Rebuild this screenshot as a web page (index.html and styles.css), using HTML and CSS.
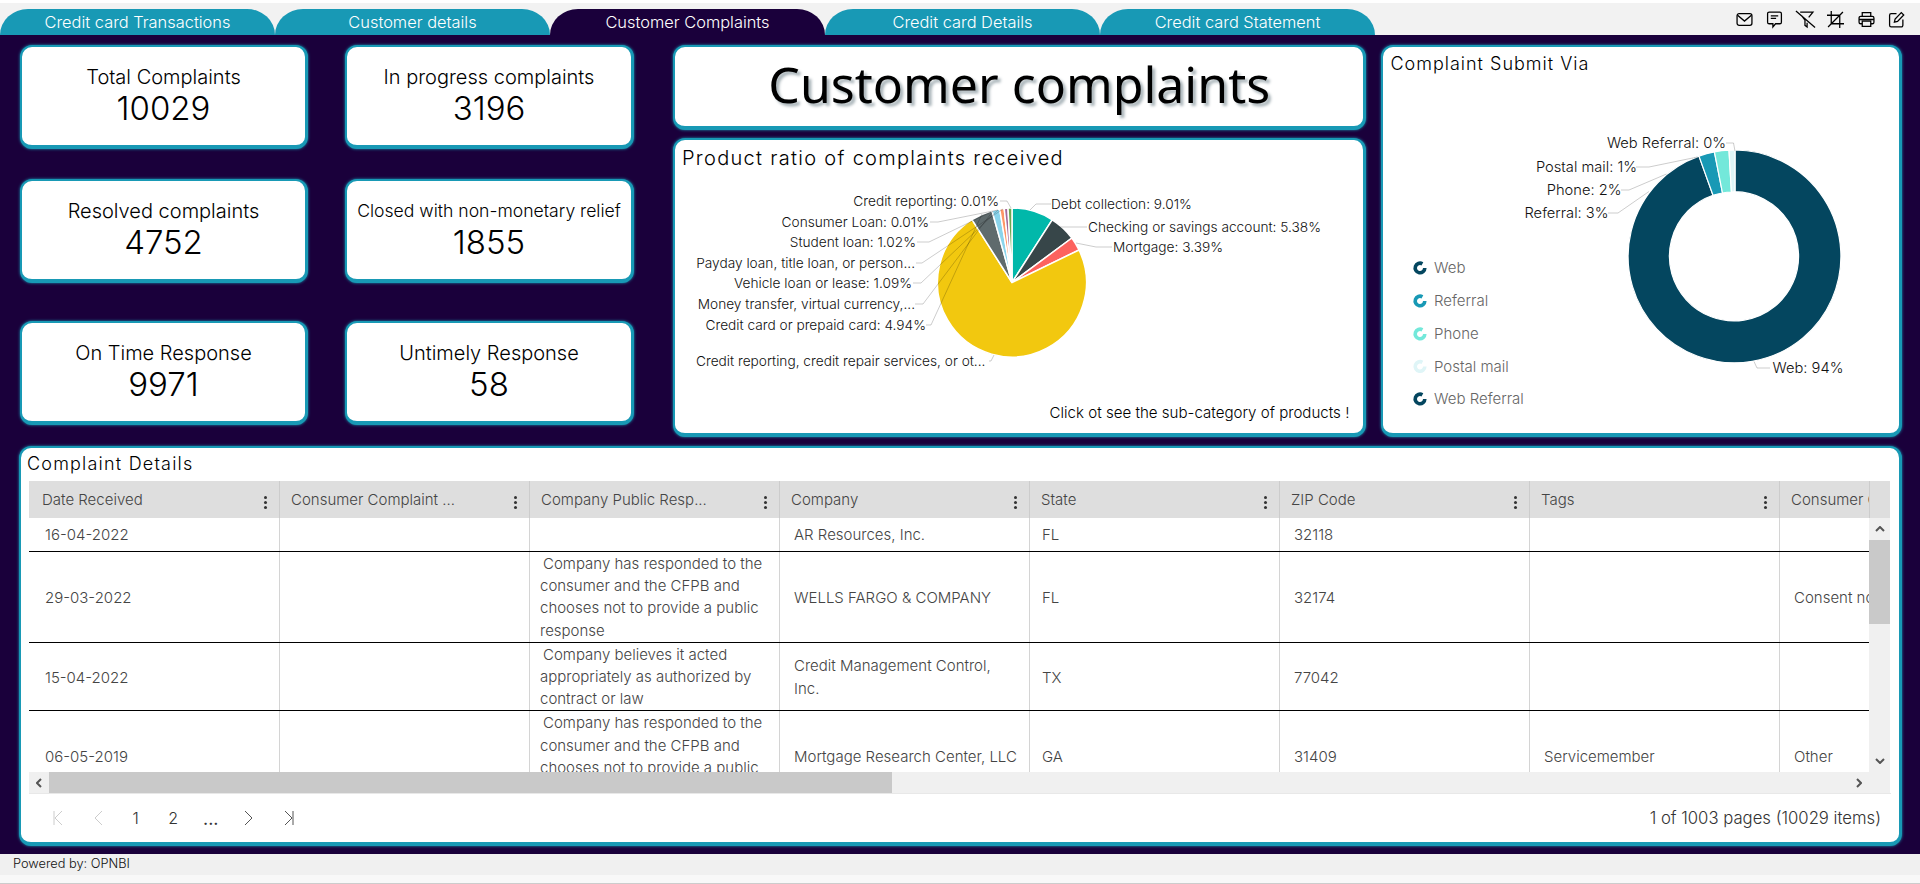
FILE: index.html
```html
<!DOCTYPE html>
<html lang="en">
<head>
    <meta charset="UTF-8">
    <meta name="viewport" content="width=device-width, initial-scale=1.0">
    <title>Customer Complaints</title>
    <link rel="stylesheet" href="styles.css">
</head>
<body>
    <div class="topbar">
        <div class="tabs">
            <div class="tab">Credit card Transactions</div>
            <div class="tab">Customer details</div>
            <div class="tab active">Customer Complaints</div>
            <div class="tab">Credit card Details</div>
            <div class="tab">Credit card Statement</div>
        </div>
        <div class="tools">
            <svg viewBox="0 0 16 16"><rect x="1" y="2.5" width="14" height="11" rx="2"/><path d="M1.5 4 8 9.5 14.5 4"/></svg>
            <svg viewBox="0 0 16 16"><path d="M3 1h10a1.5 1.5 0 0 1 1.5 1.5v8a1.5 1.5 0 0 1-1.5 1.5H9l-2.5 3v-3H3a1.5 1.5 0 0 1-1.5-1.5v-8A1.5 1.5 0 0 1 3 1z"/><path d="M4.5 4.5h7M4.5 7h5"/></svg>
            <svg viewBox="0 0 16 16"><path d="M-1 0l18 15.5M3 1h12l-4 5M4.5 4.5 7.5 8.5v5l2 1.5v-4"/></svg>
            <svg viewBox="0 0 16 16"><path d="M4 0v12h12M0 4h12v12M1 15 15 1"/></svg>
            <svg viewBox="0 0 16 16"><path d="M4 5V1.5h8V5M4 12H2.5A1.5 1.5 0 0 1 1 10.5v-4A1.5 1.5 0 0 1 2.5 5h11A1.5 1.5 0 0 1 15 6.5v4a1.5 1.5 0 0 1-1.5 1.5H12M4 9.5h8v5H4zM1 8h14"/></svg>
            <svg viewBox="0 0 16 16"><path d="M8 2.5H3A1.5 1.5 0 0 0 1.5 4v9.5A1.5 1.5 0 0 0 3 15h9.5a1.5 1.5 0 0 0 1.5-1.5V8"/><path d="M6 10.5l.7-3L12.5 1.5l2.3 2.3L9 9.8z"/></svg>
        </div>
    </div>

    <main class="dash">
        <section class="top-row">
            <div class="stats">
                <div class="card stat"><div class="stat-label">Total Complaints</div><div class="stat-value">10029</div></div>
                <div class="card stat"><div class="stat-label">In progress complaints</div><div class="stat-value">3196</div></div>
                <div class="card stat"><div class="stat-label">Resolved complaints</div><div class="stat-value">4752</div></div>
                <div class="card stat"><div class="stat-label small">Closed with non-monetary relief</div><div class="stat-value">1855</div></div>
                <div class="card stat"><div class="stat-label">On Time Response</div><div class="stat-value">9971</div></div>
                <div class="card stat"><div class="stat-label">Untimely Response</div><div class="stat-value">58</div></div>
            </div>

            <div class="middle">
                <div class="card page-title"><h1>Customer complaints</h1></div>
                <div class="card chart product">
                    <h2 class="card-title">Product ratio of complaints received</h2>
                    <!-- viewBox starts at the card's page offset so label coords read straight from the screenshot -->
                    <svg class="chart-svg" viewBox="676 141 688 290" width="688" height="290">
                        <g stroke="#fff" stroke-width="1.5">
                            <path fill="#01b8aa" d="M1012 282.5V208A74.5 74.5 0 0 1 1052.2 219.8z"/>
                            <path fill="#374649" d="M1012 282.5 1052.2 219.8A74.5 74.5 0 0 1 1071.9 238z"/>
                            <path fill="#fd625e" d="M1012 282.5 1071.9 238A74.5 74.5 0 0 1 1079 250z"/>
                            <path fill="#f2c80f" d="M1012 282.5 1079 250A74.5 74.5 0 1 1 972 219.6z"/>
                            <path fill="#5f6b6d" d="M1012 282.5 972 219.6A74.5 74.5 0 0 1 992 210.7z"/>
                            <path fill="#8ad4eb" d="M1012 282.5 992 210.7A74.5 74.5 0 0 1 999.7 209z"/>
                            <path fill="#fe9666" d="M1012 282.5 999.7 209A74.5 74.5 0 0 1 1004.2 208.4z"/>
                            <path fill="#a66999" d="M1012 282.5 1004.2 208.4A74.5 74.5 0 0 1 1008 208.1z"/>
                            <path fill="#6aa84f" d="M1012 282.5 1008 208.1A74.5 74.5 0 0 1 1012 208z"/>
                        </g>
                        <g class="leaders">
                            <path d="M1051 204H1036L1030 210"/>
                            <path d="M1087 227H1058"/>
                            <path d="M1112 247H1096L1076 243"/>
                            <path d="M1000 201H1007L1011 208"/>
                            <path d="M930 222H938L998 210"/>
                            <path d="M917 242H929L991 212"/>
                            <path d="M916 263H922L1003 209"/>
                            <path d="M913 283H921L998 210"/>
                            <path d="M915 304H923L993 211"/>
                            <path d="M926 325H931L982 214"/>
                            <path d="M989 361H991L994 355"/>
                        </g>
                        <g class="pie-labels">
                            <text x="999" y="206" text-anchor="end">Credit reporting: 0.01%</text>
                            <text x="929" y="227" text-anchor="end">Consumer Loan: 0.01%</text>
                            <text x="916" y="247" text-anchor="end">Student loan: 1.02%</text>
                            <text x="915" y="268" text-anchor="end">Payday loan, title loan, or person...</text>
                            <text x="912" y="288" text-anchor="end">Vehicle loan or lease: 1.09%</text>
                            <text x="915" y="309" text-anchor="end">Money transfer, virtual currency,...</text>
                            <text x="926" y="330" text-anchor="end">Credit card or prepaid card: 4.94%</text>
                            <text x="696" y="366">Credit reporting, credit repair services, or ot...</text>
                            <text x="1051" y="209">Debt collection: 9.01%</text>
                            <text x="1088" y="232">Checking or savings account: 5.38%</text>
                            <text x="1113" y="252">Mortgage: 3.39%</text>
                        </g>
                    </svg>
                    <div class="chart-note">Click ot see the sub-category of products !</div>
                </div>
            </div>

            <div class="card chart via">
                <h2 class="card-title">Complaint Submit Via</h2>
                <svg class="chart-svg" viewBox="1385 48 515 383" width="515" height="383">
                    <g stroke="#fff" stroke-width="1.2">
                        <path fill="#04465f" d="M1736 150A106.4 106.4 0 1 1 1700 156.1L1714 195.2A64.6 64.6 0 1 0 1736 191.7z"/>
                        <path fill="#1899b5" d="M1700 156.1A106.4 106.4 0 0 1 1715.4 151.9L1723.5 193A64.6 64.6 0 0 0 1714 195.2z"/>
                        <path fill="#73e8da" d="M1715.4 151.9A106.4 106.4 0 0 1 1730 150.2L1732.4 192A64.6 64.6 0 0 0 1723.5 193z"/>
                        <path fill="#dff5f7" d="M1730 150.2A106.4 106.4 0 0 1 1736 150V191.7A64.6 64.6 0 0 0 1732.4 192z"/>
                    </g>
                    <g class="leaders">
                        <path d="M1727 143H1734.5L1736 151"/>
                        <path d="M1637 167H1650L1698.5 157"/>
                        <path d="M1622 190H1630L1667.5 174"/>
                        <path d="M1609 213H1619L1650 191.5"/>
                        <path d="M1771 368H1758L1755 361.5"/>
                    </g>
                    <g class="pie-labels via-labels">
                        <text x="1727" y="148" text-anchor="end">Web Referral: 0%</text>
                        <text x="1638" y="172" text-anchor="end">Postal mail: 1%</text>
                        <text x="1622.5" y="195" text-anchor="end">Phone: 2%</text>
                        <text x="1609.5" y="218" text-anchor="end">Referral: 3%</text>
                        <text x="1773.5" y="373">Web: 94%</text>
                    </g>
                    <g class="legend-icons" fill="none" stroke-width="3.6">
                        <path stroke="#04465f" d="M1425.8 268a4.8 4.8 0 1 1-2.4-4.16"/>
                        <path stroke="#1899b5" d="M1425.8 301a4.8 4.8 0 1 1-2.4-4.16"/>
                        <path stroke="#73e8da" d="M1425.8 334a4.8 4.8 0 1 1-2.4-4.16"/>
                        <path stroke="#dff5f7" d="M1425.8 366.5a4.8 4.8 0 1 1-2.4-4.16"/>
                        <path stroke="#04465f" d="M1425.8 399a4.8 4.8 0 1 1-2.4-4.16"/>
                    </g>
                    <g class="legend-labels">
                        <text x="1435" y="273">Web</text>
                        <text x="1435" y="306">Referral</text>
                        <text x="1435" y="339">Phone</text>
                        <text x="1435" y="372">Postal mail</text>
                        <text x="1435" y="404">Web Referral</text>
                    </g>
                </svg>
            </div>
        </section>

        <section class="card details">
            <h2 class="card-title">Complaint Details</h2>
            <div class="grid-wrap">
                <div class="grid-head">
                    <div class="hcell">Date Received<span class="dots"></span></div>
                    <div class="hcell">Consumer Complaint ...<span class="dots"></span></div>
                    <div class="hcell">Company Public Resp...<span class="dots"></span></div>
                    <div class="hcell">Company<span class="dots"></span></div>
                    <div class="hcell">State<span class="dots"></span></div>
                    <div class="hcell">ZIP Code<span class="dots"></span></div>
                    <div class="hcell">Tags<span class="dots"></span></div>
                    <div class="hcell last">Consumer Consent</div>
                </div>
                <div class="grid-body">
                    <div class="rows">
                        <div class="row r1">
                            <div class="cell">16-04-2022</div><div class="cell"></div><div class="cell"></div>
                            <div class="cell">AR Resources, Inc.</div><div class="cell">FL</div><div class="cell">32118</div><div class="cell"></div><div class="cell"></div>
                        </div>
                        <div class="row">
                            <div class="cell">29-03-2022</div><div class="cell"></div>
                            <div class="cell resp">Company has responded to the consumer and the CFPB and chooses not to provide a public response</div>
                            <div class="cell">WELLS FARGO &amp; COMPANY</div><div class="cell">FL</div><div class="cell">32174</div><div class="cell"></div><div class="cell">Consent not provided</div>
                        </div>
                        <div class="row">
                            <div class="cell">15-04-2022</div><div class="cell"></div>
                            <div class="cell resp">Company believes it acted appropriately as authorized by contract or law</div>
                            <div class="cell narrow">Credit Management Control, Inc.</div><div class="cell">TX</div><div class="cell">77042</div><div class="cell"></div><div class="cell"></div>
                        </div>
                        <div class="row">
                            <div class="cell">06-05-2019</div><div class="cell"></div>
                            <div class="cell resp">Company has responded to the consumer and the CFPB and chooses not to provide a public response</div>
                            <div class="cell">Mortgage Research Center, LLC</div><div class="cell">GA</div><div class="cell">31409</div><div class="cell">Servicemember</div><div class="cell">Other</div>
                        </div>
                    </div>
                    <div class="vscroll">
                        <svg class="arrow" viewBox="0 0 10 6"><path d="M1 5l4-4 4 4"/></svg>
                        <div class="vtrack"><div class="vthumb"></div></div>
                        <svg class="arrow" viewBox="0 0 10 6"><path d="M1 1l4 4 4-4"/></svg>
                    </div>
                </div>
                <div class="hscroll">
                    <svg class="arrow side" viewBox="0 0 6 10"><path d="M5 1 1 5l4 4"/></svg>
                    <div class="htrack"><div class="hthumb"></div></div>
                    <svg class="arrow side" viewBox="0 0 6 10"><path d="M1 1l4 4-4 4"/></svg>
                </div>
            </div>
            <div class="pager">
                <div class="pages">
                    <svg class="pg off" viewBox="0 0 10 14"><path d="M1 0v14M9 0 2 7l7 7"/></svg>
                    <svg class="pg off prev" viewBox="0 0 10 14"><path d="M8 0 1 7l7 7"/></svg>
                    <span class="num">1</span>
                    <span class="num">2</span>
                    <span class="num more">...</span>
                    <svg class="pg next" viewBox="0 0 10 14"><path d="M2 0l7 7-7 7"/></svg>
                    <svg class="pg" viewBox="0 0 10 14"><path d="M9 0v14M1 0l7 7-7 7"/></svg>
                </div>
                <div class="pager-info">1 of 1003 pages (10029 items)</div>
            </div>
        </section>
    </main>

    <footer class="foot">Powered by: OPNBI</footer>
    <div class="foot-strip"></div>
</body>
</html>
```

FILE: styles.css
```css
* { box-sizing: border-box; }
body {
    margin: 0;
    height: 884px;
    overflow: hidden;
    background: #fff;
    font-family: Inter, "Noto Sans", sans-serif;
    color: #000;
    display: flex;
    flex-direction: column;
}

/* top strip */
.topbar {
    height: 32px;
    margin-top: 3px;
    flex: none;
    background: #f2f2f2;
    display: flex;
    justify-content: space-between;
    align-items: flex-end;
}
.tabs { display: flex; }
.tab {
    width: 275px;
    height: 26px;
    background: #1899b5;
    color: #fff;
    font-size: 16.4px;
    font-weight: 300;
    line-height: 26px;
    text-align: center;
    border-radius: 28px 28px 0 0 / 26px 26px 0 0;
}
.tab.active { background: #1a003b; }
.tools { display: flex; gap: 13.5px; padding: 0 15px 7px 0; }
.tools svg {
    width: 17px;
    height: 17px;
    fill: none;
    stroke: #000;
    stroke-width: 1.2;
    overflow: visible;
}

/* dark area */
.dash {
    height: 819px;
    flex: none;
    background: #1a003b;
    padding: 10px 18px 8px 20px;
    display: flex;
    flex-direction: column;
    gap: 9px;
}
.top-row {
    display: flex;
    height: 392px;
    flex: none;
}
.stats {
    width: 614px;
    height: 380px;
    display: grid;
    grid-template-columns: 288px 289px;
    column-gap: 37px;
    grid-template-rows: 104px 104px 112px;
    row-gap: 30px;
}
.stat:nth-child(n+5) { margin-top: 8px; }

.card {
    background: #fff;
    border: 2px solid #1899b5;
    border-bottom-width: 4px;
    border-right-width: 3px;
    border-radius: 12px;
    box-shadow: 0 0 3px #1899b5;
}
.stat {
    text-align: center;
    padding-top: 18px;
}
.stat-label { font-size: 20px; font-weight: 300; line-height: 24px; white-space: nowrap; }
.stat-label.small { font-size: 17.6px; }
.stat-value { font-size: 33px; font-weight: 300; line-height: 40px; margin-top: -1px; }

.middle {
    width: 694px;
    margin-left: 39px;
    display: flex;
    flex-direction: column;
    gap: 8px;
}
.page-title {
    height: 85px;
    display: flex;
    align-items: center;
    justify-content: center;
    padding-bottom: 6px;
}
.page-title h1 {
    margin: 0;
    font-family: "Noto Sans", sans-serif;
    font-size: 50px;
    font-weight: 400;
    text-shadow: 3px 3px 3px #a9b4b9;
}
.chart { position: relative; }
.product { height: 299px; }
.via { width: 521px; margin-left: 15px; }
.card-title {
    margin: 0;
    font-size: 20px;
    font-weight: 300;
    letter-spacing: 1.3px;
    line-height: 24px;
    padding: 6px 0 0 7px;
}
.via .card-title { font-size: 18px; letter-spacing: 1px; padding-top: 5px; }
.chart-svg { position: absolute; left: 1px; top: 1px; }
.leaders path { fill: none; stroke: rgba(0,0,0,0.2); stroke-width: 1; }
.pie-labels text { font-size: 13.7px; font-weight: 300; fill: #111; }
.via-labels text { font-size: 14.7px; }
.legend-labels text { font-size: 15px; font-weight: 300; fill: #666; }
.chart-note {
    position: absolute;
    right: 14px;
    bottom: 11px;
    font-size: 15.1px;
    font-weight: 300;
}

/* table card */
.details {
    height: 400px;
    margin-left: -1px;
    padding: 0 8px;
    display: flex;
    flex-direction: column;
}
.details .card-title {
    font-size: 18px;
    letter-spacing: 1.2px;
    line-height: 22px;
    height: 33px;
    flex: none;
    padding: 5px 0 0 0;
    margin-left: -2px;
}
.grid-wrap { width: 1861px; font-size: 15px; font-weight: 300; color: #444; flex: none; }
.grid-head {
    height: 37px;
    background: #dedede;
    display: flex;
    overflow: hidden;
    padding-left: 1px;
}
.hcell {
    flex: none;
    width: 250px;
    padding: 1px 0 0 11px;
    line-height: 36px;
    border-right: 1px solid #ccc;
    position: relative;
    white-space: nowrap;
}
.hcell:first-child { padding-left: 12px; }
.hcell.last { width: 90px; overflow: hidden; }
.dots {
    position: absolute;
    right: 12px;
    top: 15px;
    width: 3px;
    height: 3px;
    border-radius: 50%;
    background: #333;
    box-shadow: 0 5px 0 #333, 0 10px 0 #333;
}
.grid-body { display: flex; height: 254px; overflow: hidden; }
.rows { width: 1840px; flex: none; overflow: hidden; }
.row {
    display: flex;
    border-bottom: 1px solid #000;
    padding-left: 1px;
    width: 1840px;
    overflow: hidden;
}
.row.r1 { height: 34px; }
.cell {
    flex: none;
    width: 250px;
    padding: 2px 8px 0 14px;
    line-height: 22.2px;
    border-right: 1px solid #d4d4d4;
    display: flex;
    align-items: center;
}
.cell:first-child { padding-left: 15px; }
.cell:nth-child(5) { padding-left: 12px; }
.cell:last-child { width: 89px; white-space: nowrap; overflow: hidden; border-right: 0; padding-right: 0; }
.cell.resp { display: block; padding: 1px 8px 0 10px; text-indent: 3px; }
.cell.narrow { padding-right: 30px; }
.vscroll {
    width: 21px;
    background: #f0f0f0;
    display: flex;
    flex-direction: column;
    align-items: center;
}
.vtrack { flex: 1; width: 100%; }
.vthumb { height: 84px; background: #c9c9c9; }
.arrow { fill: none; stroke: #555; stroke-width: 2; width: 10px; height: 6px; margin: 8px 0; flex: none; }
.arrow.side { width: 6px; height: 10px; margin: 0 7px; }
.hscroll {
    height: 21px;
    background: #f0f0f0;
    display: flex;
    align-items: center;
    padding-right: 21px;
}
.htrack { flex: 1; height: 100%; }
.hthumb { height: 100%; width: 843px; background: #c9c9c9; }
.pager {
    flex: 1;
    display: flex;
    justify-content: space-between;
    align-items: center;
    font-size: 16px;
    font-weight: 300;
    color: #333;
    border-top: 1px solid #e8e8e8;
}
.pages { display: flex; align-items: center; padding-left: 24px; }
.pg { width: 10px; height: 14px; fill: none; stroke: #555; stroke-width: 1; margin-right: 31px; }
.pg.off { stroke: #ccc; }
.pg.prev { margin-right: 13px; }
.pg.next { margin-left: 13px; }
.num { width: 37.5px; text-align: center; }
.num.more { font-weight: 400; font-size: 18px; }
.pager-info { font-size: 16.7px; padding-right: 10px; }

.foot {
    height: 21px;
    flex: none;
    background: #f0f0f0;
    font-size: 12.8px;
    font-weight: 300;
    line-height: 19px;
    padding-left: 13px;
    color: #111;
}
.foot-strip { flex: 1; background: #f8f8f8; border-bottom: 1px solid #ccc; }
```
